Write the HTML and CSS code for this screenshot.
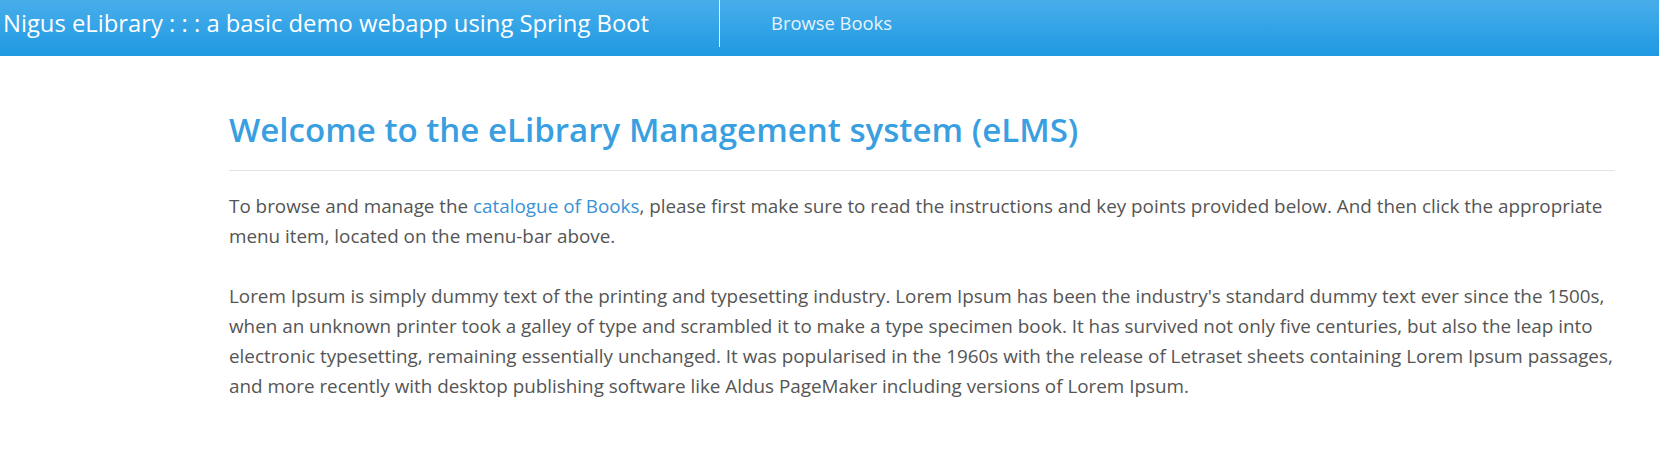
FILE: index.html
```html
<!DOCTYPE html>
<html>
<head>
<meta charset="utf-8">
<link rel="stylesheet" href="styles.css">
</head>
<body>
<nav class="navbar">
  <a class="brand" href="#">Nigus eLibrary : : : a basic demo webapp using Spring Boot</a>
  <div class="divider"></div>
  <a class="nav-link" href="#">Browse Books</a>
</nav>
<main class="container">
  <h1 class="title">Welcome to the eLibrary Management system (eLMS)</h1>
  <p class="text">To browse and manage the <a class="link" href="#">catalogue of Books</a>, please first make sure to read the instructions and key points provided below. And then click the appropriate menu item, located on the menu-bar above.</p>
  <p class="text">Lorem Ipsum is simply dummy text of the printing and typesetting industry. Lorem Ipsum has been the industry's standard dummy text ever since the 1500s, when an unknown printer took a galley of type and scrambled it to make a type specimen book. It has survived not only five centuries, but also the leap into electronic typesetting, remaining essentially unchanged. It was popularised in the 1960s with the release of Letraset sheets containing Lorem Ipsum passages, and more recently with desktop publishing software like Aldus PageMaker including versions of Lorem Ipsum.</p>
</main>
</body>
</html>
```
FILE: styles.css
```css
html, body {
  margin: 0;
  padding: 0;
  background: #ffffff;
  font-family: "Open Sans", "Noto Sans", sans-serif;
}
.navbar {
  height: 56px;
  display: flex;
  align-items: flex-start;
  background: linear-gradient(to bottom, #48aeea 0%, #1f99e3 100%);
}
.brand {
  color: #ffffff;
  text-decoration: none;
  font-size: 23.8px;
  line-height: 46px;
  padding-left: 3px;
  width: 716px;
  white-space: nowrap;
}
.divider {
  width: 1px;
  height: 47px;
  background: #e8f4fc;
}
.nav-link {
  color: #e6f3fc;
  text-decoration: none;
  font-size: 18.4px;
  line-height: 46px;
  margin-left: 51px;
}
.container {
  margin-left: 229px;
  width: 1386px;
  padding-top: 50px;
}
.title {
  margin: 0;
  color: #3a9fe1;
  font-size: 33.1px;
  font-weight: 600;
  line-height: 48px;
  padding-bottom: 16px;
  border-bottom: 1px solid #e3e3e3;
}
.text {
  margin: 20px 0 30px;
  color: #555555;
  font-size: 18.85px;
  line-height: 30px;
}
.link {
  color: #3a92d8;
  text-decoration: none;
}
```
